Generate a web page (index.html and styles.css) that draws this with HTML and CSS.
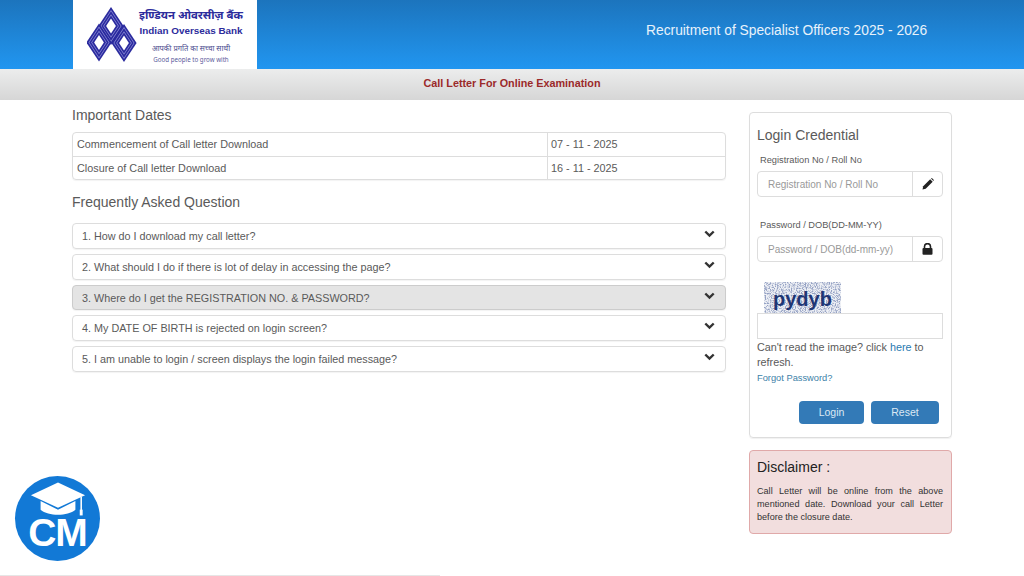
FILE: index.html
```html
<!DOCTYPE html>
<html lang="en">
<head>
<meta charset="utf-8">
<title>Call Letter For Online Examination</title>
<link rel="stylesheet" href="styles.css">
</head>
<body>
<header class="top">
  <div class="logo">
    <svg class="mark" width="50" height="58" viewBox="0 0 50 58">
      <defs>
        <g id="dia">
          <path d="M0-19 12.6 0 0 19-12.6 0Z" fill="#2a2a9e"/>
          <path d="M0-15.9 10.5 0 0 15.9-10.5 0Z" fill="#8d8dd8"/>
          <path d="M0-14.7 9.7 0 0 14.7-9.7 0Z" fill="#2a2a9e"/>
          <path d="M0-11.8 7.8 0 0 11.8-7.8 0Z" fill="#8d8dd8"/>
          <path d="M0-10.6 7 0 0 10.6-7 0Z" fill="#2a2a9e"/>
          <path d="M0-7.4 4.9 0 0 7.4-4.9 0Z" fill="#fff"/>
        </g>
      </defs>
      <use href="#dia" x="24" y="20"/>
      <use href="#dia" x="37" y="37"/>
      <use href="#dia" x="12" y="36.5"/>
    </svg>
    <div class="logo-text">
      <div class="hi-name">इण्डियन ओवरसीज़ बैंक</div>
      <div class="en-name">Indian Overseas Bank</div>
      <div class="hi-tag">आपकी प्रगति का सच्चा साथी</div>
      <div class="en-tag">Good people to grow with</div>
    </div>
  </div>
  <div class="recruit">Recruitment of Specialist Officers 2025 - 2026</div>
</header>
<div class="subbar">Call Letter For Online Examination</div>
<main class="main">
  <section class="left">
    <h2 class="head">Important Dates</h2>
    <div class="dates">
      <div class="d-row"><div class="d-name">Commencement of Call letter Download</div><div class="d-val">07 - 11 - 2025</div></div>
      <div class="d-row"><div class="d-name">Closure of Call letter Download</div><div class="d-val">16 - 11 - 2025</div></div>
    </div>
    <h2 class="head faq-head">Frequently Asked Question</h2>
    <div class="faq">
      <div class="q"><span>1. How do I download my call letter?</span><svg class="chev" width="11" height="8" viewBox="0 0 11 8"><path d="M1.3 1.5 5.5 5.6 9.7 1.5" fill="none" stroke="#333" stroke-width="2.4"/></svg></div>
      <div class="q"><span>2. What should I do if there is lot of delay in accessing the page?</span><svg class="chev" width="11" height="8" viewBox="0 0 11 8"><path d="M1.3 1.5 5.5 5.6 9.7 1.5" fill="none" stroke="#333" stroke-width="2.4"/></svg></div>
      <div class="q q-on"><span>3. Where do I get the REGISTRATION NO. &amp; PASSWORD?</span><svg class="chev" width="11" height="8" viewBox="0 0 11 8"><path d="M1.3 1.5 5.5 5.6 9.7 1.5" fill="none" stroke="#333" stroke-width="2.4"/></svg></div>
      <div class="q"><span>4. My DATE OF BIRTH is rejected on login screen?</span><svg class="chev" width="11" height="8" viewBox="0 0 11 8"><path d="M1.3 1.5 5.5 5.6 9.7 1.5" fill="none" stroke="#333" stroke-width="2.4"/></svg></div>
      <div class="q"><span>5. I am unable to login / screen displays the login failed message?</span><svg class="chev" width="11" height="8" viewBox="0 0 11 8"><path d="M1.3 1.5 5.5 5.6 9.7 1.5" fill="none" stroke="#333" stroke-width="2.4"/></svg></div>
    </div>
  </section>
  <aside class="right">
    <form class="login">
      <h2 class="login-title">Login Credential</h2>
      <label class="lab">Registration No / Roll No</label>
      <div class="group">
        <div class="ph">Registration No / Roll No</div>
        <div class="addon"><svg width="12" height="12" viewBox="0 0 12 12"><path d="M0.5 11.5 1.2 8.3 8.2 1.3 10.7 3.8 3.7 10.8Z" fill="#222"/><path d="M9 .6 9.9.1 11.9 2.1 11.4 3Z" fill="#222"/></svg></div>
      </div>
      <label class="lab lab2">Password / DOB(DD-MM-YY)</label>
      <div class="group">
        <div class="ph">Password / DOB(dd-mm-yy)</div>
        <div class="addon"><svg width="11" height="12" viewBox="0 0 11 12"><path d="M2.5 5.5V3.6a3 3 0 0 1 6 0v1.9" fill="none" stroke="#222" stroke-width="1.6"/><rect x="0.5" y="5" width="10" height="6.8" rx="1" fill="#222"/></svg></div>
      </div>
      <div class="captcha">
        <svg width="77" height="31" viewBox="0 0 77 31">
          <filter id="noise"><feTurbulence type="fractalNoise" baseFrequency="0.8" numOctaves="2" seed="4"/><feColorMatrix values="0 0 0 0 .3  0 0 0 0 .36  0 0 0 0 .55  0 0 0 4 -1.7"/></filter>
          <rect width="77" height="31" fill="#eef0f5"/>
          <rect width="77" height="31" filter="url(#noise)"/>
          <text class="cap-text" x="9" y="24">pydyb</text>
        </svg>
      </div>
      <div class="cap-input"></div>
      <p class="hint">Can't read the image? click <a class="link">here</a> to refresh.</p>
      <a class="forgot">Forgot Password?</a>
      <div class="btns">
        <div class="btn btn-login">Login</div>
        <div class="btn btn-reset">Reset</div>
      </div>
    </form>
    <div class="disc">
      <h3 class="disc-title">Disclaimer :</h3>
      <p class="disc-text">Call Letter will be online from the above mentioned date. Download your call Letter before the closure date.</p>
    </div>
  </aside>
</main>
<div class="badge">
  <svg class="cap" width="58" height="36" viewBox="0 0 60 36">
    <path d="M30 1 58 14 30 27 2 14Z" fill="#fff"/>
    <path d="M12 20 30 29 48 20V29C40 36 20 36 12 29Z" fill="#fff"/>
    <path d="M54 16V30" stroke="#fff" stroke-width="1.6"/>
    <rect x="52.5" y="29" width="3" height="6" fill="#fff"/>
  </svg>
  <span class="cm">CM</span>
</div>
<div class="foot-line"></div>
</body>
</html>
```
FILE: styles.css
```css
* { box-sizing: border-box; }
html, body { margin: 0; padding: 0; }
body {
  width: 1024px;
  height: 576px;
  overflow: hidden;
  background: #fff;
  font-family: "Liberation Sans", Arial, sans-serif;
  color: #5a5a5a;
  position: relative;
}
.top {
  height: 69px;
  background: linear-gradient(#1c74bd, #2196f0);
  display: flex;
  padding-left: 73px;
}
.logo {
  width: 184px;
  height: 69px;
  background: #fff;
  display: flex;
  padding: 5px 0 0 14px;
}
.logo-text {
  margin-left: 2px;
  width: 104px;
  text-align: center;
  color: #2c2c9c;
  font-family: "Noto Sans", "Liberation Sans", sans-serif;
}
.hi-name { font-size: 11.4px; line-height: 18px; font-weight: 700; white-space: nowrap; margin-top: 1px; }
.en-name { font-family: "Liberation Sans", sans-serif; font-size: 9.9px; font-weight: 700; line-height: 12px; white-space: nowrap; margin-top: 1px; }
.hi-tag { font-size: 7.5px; line-height: 12px; margin-top: 5px; white-space: nowrap; color: #4a4a8e; }
.en-tag { font-size: 6.2px; line-height: 9px; margin-top: 1px; white-space: nowrap; color: #5a5a9c; }
.mark { flex: none; margin-top: 1px; }
.recruit {
  margin-left: 389px;
  margin-top: 22px;
  font-size: 13.8px;
  line-height: 17px;
  color: #e8f2fb;
  white-space: nowrap;
}
.subbar {
  height: 31px;
  background: linear-gradient(#eceded, #d6d6d6);
  text-align: center;
  font-size: 10.8px;
  font-weight: 700;
  line-height: 29px;
  color: #9b2a2a;
}
.main {
  display: flex;
  gap: 23px;
  padding: 0 72px;
}
.left { width: 654px; flex: none; }
.right { width: 203px; flex: none; padding-top: 12px; }
.head {
  margin: 0;
  font-size: 14px;
  font-weight: 400;
  line-height: 16px;
  color: #5a5a5a;
  padding-top: 7px;
  height: 32px;
}
.dates {
  border: 1px solid #ddd;
  border-radius: 4px;
  box-shadow: 0 1px 1px rgba(0,0,0,.05);
}
.d-row { display: flex; height: 23px; font-size: 10.83px; line-height: 23px; }
.d-row + .d-row { border-top: 1px solid #ddd; }
.d-name { width: 475px; padding-left: 4px; border-right: 1px solid #ddd; }
.d-val { padding-left: 3px; }
.faq-head { padding-top: 14px; height: 43px; }
.faq { display: flex; flex-direction: column; gap: 5px; }
.q {
  height: 25.75px;
  border: 1px solid #ddd;
  border-radius: 4px;
  box-shadow: 0 1px 1px rgba(0,0,0,.05);
  display: flex;
  justify-content: space-between;
  padding: 0 10px 0 9px;
  font-size: 10.8px;
  line-height: 25px;
  align-items: flex-start;
}
.q-on { background: #e4e4e4; border-color: #ccc; }
.chev { margin-top: 6px; }
.login {
  height: 326px;
  border: 1px solid #ddd;
  border-radius: 4px;
  box-shadow: 0 1px 1px rgba(0,0,0,.06);
  padding: 14px 8px 0 7px;
}
.login-title { margin: 0; font-size: 14px; font-weight: 400; line-height: 17px; color: #5a5a5a; }
.lab { display: block; font-size: 9.25px; line-height: 12px; margin: 10px 0 0 3px; color: #5a5a5a; }
.lab2 { margin-top: 22px; }
.group { display: flex; height: 26px; margin-top: 5px; border: 1px solid #ddd; border-radius: 4px; }
.ph { flex: 1; font-size: 10px; line-height: 25px; padding-left: 10px; color: #999; }
.addon { width: 30px; border-left: 1px solid #ddd; display: flex; align-items: center; justify-content: center; }
.captcha { height: 31px; margin: 20px 0 0 7px; }
.captcha svg { display: block; }
.cap-text { font: 700 20px "Liberation Sans", sans-serif; fill: #1f3674; }
.cap-input { height: 26px; border: 1px solid #ddd; }
.hint { margin: 1px 0 0; font-size: 10.8px; line-height: 15px; color: #5a5a5a; }
.link { color: #2a7ab0; }
.forgot { display: block; margin-top: 2px; font-size: 9.3px; line-height: 12px; color: #3d7fa8; }
.btns { display: flex; gap: 7px; margin: 17px 4px 0 0; justify-content: flex-end; }
.btn { height: 23px; border-radius: 4px; background: #337ab7; color: #dce9f4; font-size: 10.5px; line-height: 23px; text-align: center; }
.btn-login { width: 65px; }
.btn-reset { width: 68px; }
.disc {
  margin-top: 12px;
  height: 84px;
  background: #f2dede;
  border: 1px solid #e0a9a9;
  border-radius: 4px;
  padding: 8px 8px 0 7px;
}
.disc-title { margin: 0; font-size: 14px; font-weight: 400; line-height: 17px; color: #222; }
.disc-text { margin: 9px 0 0; font-size: 9.1px; line-height: 13px; text-align: justify; color: #333; }
.badge {
  position: absolute;
  left: 15px;
  top: 476px;
  width: 85px;
  height: 85px;
  border-radius: 50%;
  background: #1279d6;
  overflow: hidden;
}
.cap { position: absolute; left: 14px; top: 5px; }
.cm {
  position: absolute;
  left: 0;
  right: 0;
  top: 35px;
  text-align: center;
  font-size: 39px;
  line-height: 44px;
  letter-spacing: -1px;
  color: #fff;
  font-weight: 700;
}
.foot-line {
  position: absolute;
  left: 0;
  bottom: 0;
  width: 440px;
  height: 1px;
  background: #e6e6e6;
}
```
